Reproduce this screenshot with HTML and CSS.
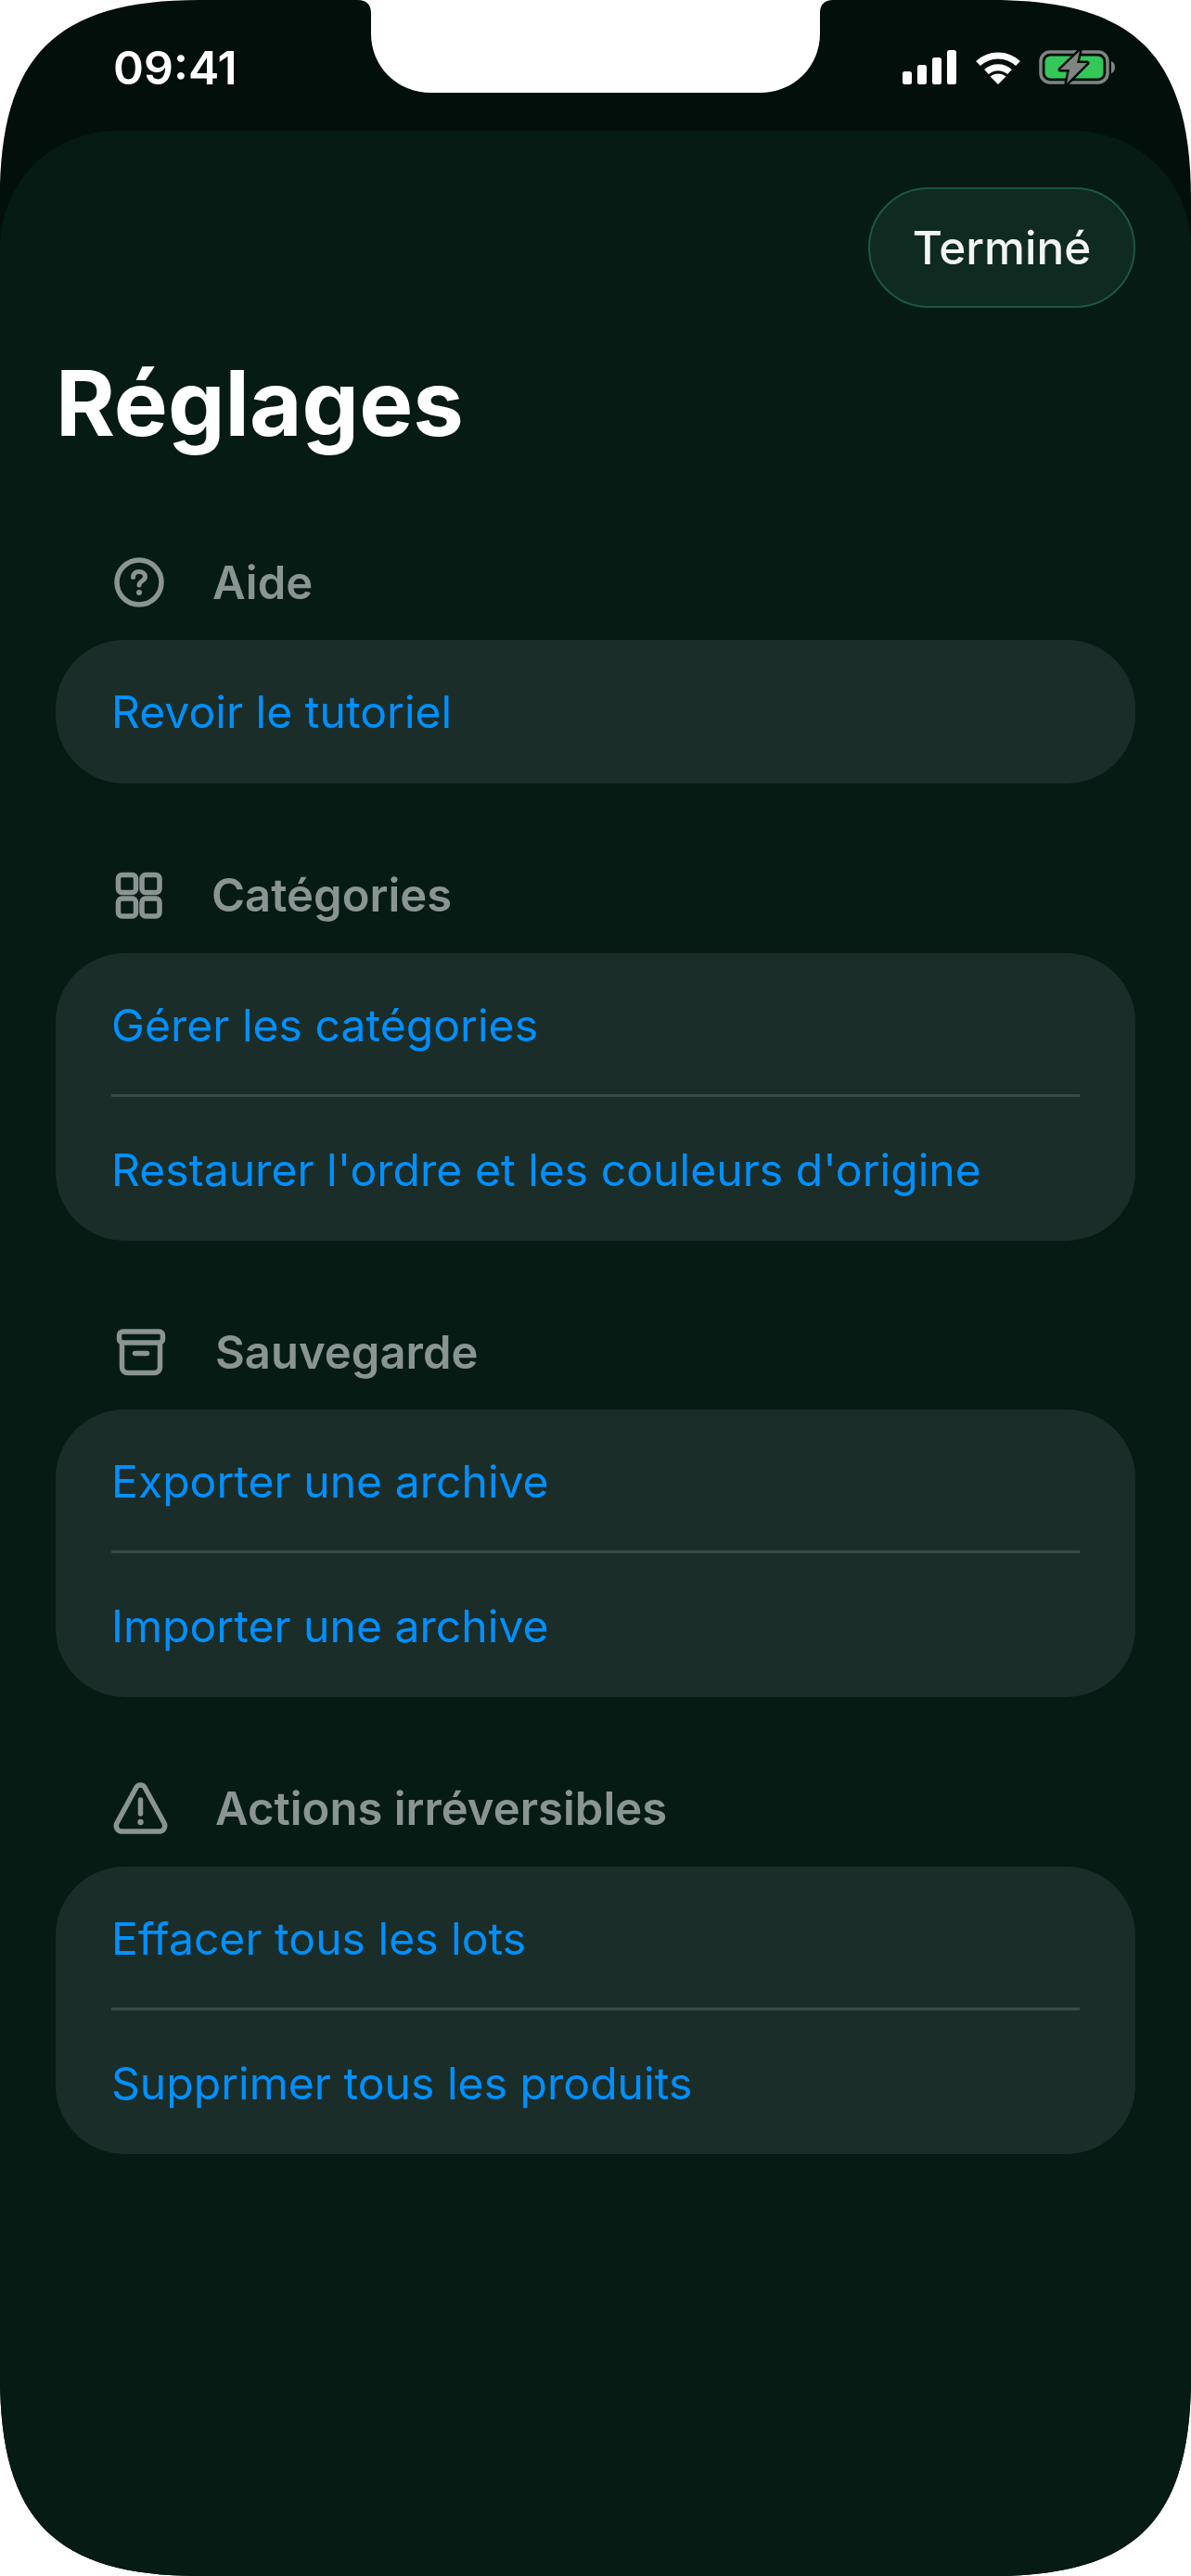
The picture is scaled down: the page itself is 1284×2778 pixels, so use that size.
FILE: index.html
```html
<!DOCTYPE html>
<html>
    <head>
        <meta charset="utf-8">
        <title>Réglages</title>
        <link rel="stylesheet" href="styles.css">
    </head>

    <body>
        <div class="phone">
            <div class="statusbar">
                <span class="time">09:41</span>
                <div class="status-icons">
                    <svg class="ic-signal" viewBox="0 0 58 37">
                        <rect x="0" y="23" width="10" height="14" rx="2.5"/>
                        <rect x="16" y="16" width="10" height="21" rx="2.5"/>
                        <rect x="32" y="8" width="10" height="29" rx="2.5"/>
                        <rect x="48" y="0" width="10" height="37" rx="2.5"/>
                    </svg>
                    <svg class="ic-wifi" viewBox="0 0 50 37">
                        <path class="wifi-arc" d="M3.5 14.5C15.5 3 34.5 3 46.5 14.5"/>
                        <path class="wifi-arc" d="M12.5 23.5C19.5 17 30.5 17 37.5 23.5"/>
                        <path class="wifi-dot" d="M25 37L16.5 28.5C21.5 24.5 28.5 24.5 33.5 28.5Z"/>
                    </svg>
                    <svg class="ic-battery" viewBox="0 0 82 39">
                        <rect class="batt-shell" x="2" y="3" width="72" height="33" rx="10"/>
                        <rect class="batt-fill" x="6.5" y="7.5" width="63" height="24" rx="6"/>
                        <path class="batt-cap" d="M78 13C81 14 82 17 82 19.5C82 22 81 25 78 26Z"/>
                        <path class="batt-bolt" d="M44 2L23 22H33L30 37L52 15H41Z"/>
                    </svg>
                </div>
            </div>

            <div class="sheet">
                <div class="topbar">
                    <button class="done">Terminé</button>
                </div>
                <h1>Réglages</h1>

                <div class="section">
                    <div class="section-head">
                        <svg class="ic" viewBox="0 0 60 60">
                            <circle cx="30" cy="30" r="24"/>
                            <path class="thin" d="M23.5 24.5C23.5 20.5 26.5 18.5 30 18.5C33.5 18.5 36.500 20.500 36.500 24C36.500 28.500 30 28.500 30 33"/>
                            <circle class="dot" cx="30" cy="41" r="3"/>
                        </svg>
                        <span>Aide</span>
                    </div>
                    <div class="card">
                        <a class="row">Revoir le tutoriel</a>
                    </div>
                </div>

                <div class="section">
                    <div class="section-head">
                        <svg class="ic ic-grid" viewBox="0 0 59 60">
                            <rect x="7.500" y="7.500" width="19" height="19" rx="4"/>
                            <rect x="33" y="7.500" width="19" height="19" rx="4"/>
                            <rect x="7.500" y="33" width="19" height="19" rx="4"/>
                            <rect x="33" y="33" width="19" height="19" rx="4"/>
                        </svg>
                        <span>Catégories</span>
                    </div>
                    <div class="card">
                        <a class="row">Gérer les catégories</a>
                        <a class="row">Restaurer l'ordre et les couleurs d'origine</a>
                    </div>
                </div>

                <div class="section">
                    <div class="section-head">
                        <svg class="ic ic-wide" viewBox="0 0 63 60">
                            <rect x="8.500" y="8" width="47" height="12" rx="4"/>
                            <path d="M11.500 20V46C11.500 50 14 52.500 18 52.500H46C50 52.500 52.500 50 52.500 46V20"/>
                            <path d="M25.500 31.500H38.500"/>
                        </svg>
                        <span>Sauvegarde</span>
                    </div>
                    <div class="card">
                        <a class="row">Exporter une archive</a>
                        <a class="row">Importer une archive</a>
                    </div>
                </div>

                <div class="section">
                    <div class="section-head">
                        <svg class="ic ic-wide" viewBox="0 0 63 60">
                            <path d="M27 6.500C29 3 34 3 36 6.500L57 45C59 49 56.500 54 52 54H11C6.500 54 4 49 6 45Z"/>
                            <path d="M31.500 20V35"/>
                            <circle class="dot" cx="31.500" cy="44" r="3.200"/>
                        </svg>
                        <span>Actions irréversibles</span>
                    </div>
                    <div class="card">
                        <a class="row">Effacer tous les lots</a>
                        <a class="row">Supprimer tous les produits</a>
                    </div>
                </div>
            </div>
        </div>
    </body>
</html>
```

FILE: styles.css
```css
html, body {
    margin: 0;
    background: #ffffff;
    font-family: "Inter", "Liberation Sans", sans-serif;
}

.phone {
    width: 1284px;
    height: 2778px;
    display: flex;
    flex-direction: column;
    background: #020f0a;
    /* screen outline with the notch cut out */
    clip-path: path("M0 215C0 60 60 0 215 0H386C395 0 400 5 400 14V36C400 72 428 100 465 100H819C856 100 884 72 884 36V14C884 5 889 0 898 0H1069C1224 0 1284 60 1284 215V2563C1284 2718 1224 2778 1069 2778H215C60 2778 0 2718 0 2563Z");
}

.statusbar {
    height: 141px;
    box-sizing: border-box;
    padding: 46px 82px 0 122px;
    display: flex;
    justify-content: space-between;
    align-items: flex-start;
}

.time {
    font-size: 50px;
    line-height: 54px;
    font-weight: 600;
    color: #ffffff;
}

.status-icons {
    display: flex;
    align-items: flex-end;
    margin-top: 7px;
}

.ic-signal {
    width: 58px;
    height: 37px;
    fill: #ffffff;
    margin-right: 20px;
}

.ic-wifi {
    width: 50px;
    height: 37px;
    margin-right: 19px;
}

.wifi-arc {
    fill: none;
    stroke: #ffffff;
    stroke-width: 7;
    stroke-linecap: butt;
}

.wifi-dot {
    fill: #ffffff;
}

.ic-battery {
    width: 82px;
    height: 39px;
    margin-bottom: -1px;
}

.batt-shell {
    fill: none;
    stroke: #7f8583;
    stroke-width: 3.500;
}

.batt-fill {
    fill: #34c759;
}

.batt-cap {
    fill: #7f8583;
}

.batt-bolt {
    fill: #7f8583;
    stroke: #020f0a;
    stroke-width: 5;
    stroke-linejoin: round;
    paint-order: stroke;
}

.sheet {
    flex: 1;
    background: #051b14;
    border-radius: 125px 125px 0 0;
    padding: 61px 60px 0 60px;
}

.topbar {
    display: flex;
    justify-content: flex-end;
}

.done {
    width: 288px;
    height: 130px;
    box-sizing: border-box;
    border: 2px solid #1b5843;
    border-radius: 65px;
    background: #0f2a20;
    color: #f2f4f3;
    font-family: inherit;
    font-size: 49.500px;
    font-weight: 500;
    padding: 0;
}

h1 {
    margin: 28px 0 0 0;
    font-size: 97.500px;
    line-height: 150px;
    font-weight: 700;
    color: #ffffff;
}

.section {
    margin-top: 87px;
}

.section + .section {
    margin-top: 89.500px;
}

.section-head {
    height: 62px;
    margin-bottom: 31px;
    padding-left: 60px;
    display: flex;
    align-items: center;
    gap: 49px;
    font-size: 49px;
    font-weight: 600;
    color: #8a9593;
}

.ic {
    width: 60px;
    height: 60px;
    flex: none;
    fill: none;
    stroke: #8a9593;
    stroke-width: 5.500;
    stroke-linecap: round;
    stroke-linejoin: round;
}

.ic-grid {
    width: 59px;
}

.ic-wide {
    width: 63px;
}

.ic .dot {
    fill: #8a9593;
    stroke: none;
}

.ic .thin {
    stroke-width: 5;
}

.card {
    background: #1b2d28;
    border-radius: 74px;
    padding: 0 60px;
}

.row {
    display: block;
    height: 155px;
    line-height: 155px;
    font-size: 48.100px;
    color: #0090ff;
}

.row + .row {
    margin-top: -3px;
    border-top: 3px solid #3c4a46;
    line-height: 157px;
}
```
